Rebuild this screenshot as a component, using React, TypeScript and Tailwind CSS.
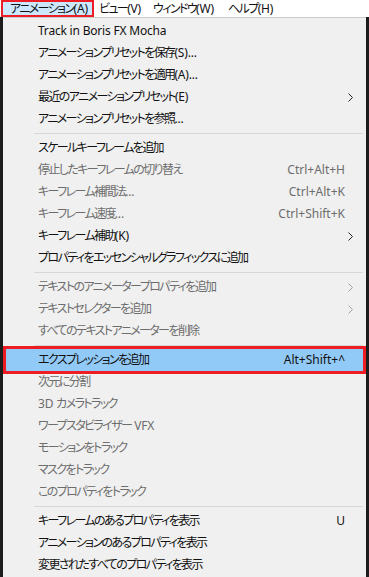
import React from 'react'

type Item =
  | { sep: true }
  | { label: string; shortcut?: string; sub?: boolean; disabled?: boolean; active?: boolean; sep?: false }

const items: Item[] = [
  { label: 'Track in Boris FX Mocha' },
  { label: 'アニメーションプリセットを保存(S)...' },
  { label: 'アニメーションプリセットを適用(A)...' },
  { label: '最近のアニメーションプリセット(E)', sub: true },
  { label: 'アニメーションプリセットを参照...' },
  { sep: true },
  { label: 'スケールキーフレームを追加' },
  { label: '停止したキーフレームの切り替え', shortcut: 'Ctrl+Alt+H', disabled: true },
  { label: 'キーフレーム補間法...', shortcut: 'Ctrl+Alt+K', disabled: true },
  { label: 'キーフレーム速度...', shortcut: 'Ctrl+Shift+K', disabled: true },
  { label: 'キーフレーム補助(K)', sub: true },
  { label: 'プロパティをエッセンシャルグラフィックスに追加' },
  { sep: true },
  { label: 'テキストのアニメータープロパティを追加', sub: true, disabled: true },
  { label: 'テキストセレクターを追加', sub: true, disabled: true },
  { label: 'すべてのテキストアニメーターを削除', disabled: true },
  { sep: true },
  { label: 'エクスプレッションを追加', shortcut: 'Alt+Shift+^', active: true },
  { label: '次元に分割', disabled: true },
  { label: '3D カメラトラック', disabled: true },
  { label: 'ワープスタビライザー VFX', disabled: true },
  { label: 'モーションをトラック', disabled: true },
  { label: 'マスクをトラック', disabled: true },
  { label: 'このプロパティをトラック', disabled: true },
  { sep: true },
  { label: 'キーフレームのあるプロパティを表示', shortcut: 'U' },
  { label: 'アニメーションのあるプロパティを表示' },
  { label: '変更されたすべてのプロパティを表示' },
]

const font = "font-['Noto_Sans','Noto_Sans_CJK_JP',sans-serif] [font-feature-settings:'palt']"

// Japanese runs get squeezed to match Yu Gothic UI widths, latin runs keep normal spacing
function Label({ text }: { text: string }) {
  const runs = text.match(/[\x00-\x7f]+|[^\x00-\x7f]+/g) ?? []
  return (
    <>
      {runs.map((r, i) => (
        <span key={i} className={/^[\x00-\x7f]/.test(r) ? 'tracking-[-0.2px]' : 'tracking-[-1.6px]'}>
          {r}
        </span>
      ))}
    </>
  )
}

function Arrow({ dim }: { dim?: boolean }) {
  return (
    <svg width="5" height="9" viewBox="0 0 5 9" className="block">
      <path d="M0.5 0.5 L4.5 4.5 L0.5 8.5" fill="none" stroke={dim ? '#a0a0a0' : '#222'} strokeWidth="1" />
    </svg>
  )
}

export default function App() {
  return (
    <div className={`w-[369px] h-[577px] bg-[#1c1c1c] overflow-hidden flex flex-col text-[12px] ${font}`}>
      {/* Menu bar */}
      <div className="h-[17px] bg-white flex items-center text-[#111] shrink-0 whitespace-nowrap">
        <div className="h-[17px] ml-[1px] w-[93px] bg-[#cce8ff] border-2 border-[#ee1c25] flex items-center pl-[7px] leading-none">
          <Label text="アニメーション(A)" />
        </div>
        <div className="ml-[5px] w-[54px] leading-none">
          <Label text="ビュー(V)" />
        </div>
        <div className="w-[75px] leading-none">
          <Label text="ウィンドウ(W)" />
        </div>
        <div className="leading-none">
          <Label text="ヘルプ(H)" />
        </div>
      </div>

      <div className="flex flex-1">
        <div className="w-[3px] bg-[#1c1c1c]" />
        {/* Dropdown panel */}
        <div className="w-[363px] bg-[#f0f0f0] border-t border-[#cccccc] pt-[2px] flex flex-col">
          {items.map((it, i) =>
            it.sep ? (
              <div key={i} className="h-[7px] flex items-center pl-[31px] pr-[3px]">
                <div className="h-px w-full bg-[#d7d7d7]" />
              </div>
            ) : (
              <div
                key={i}
                className={`h-[22px] flex items-center mx-[3px] ${
                  it.active ? 'bg-[#91c9f7] outline-[3px] outline-solid outline-[#ee1c25]' : ''
                } ${it.disabled ? 'text-[#6d6d6d]' : 'text-[#111]'}`}
              >
                <div className="pl-[32px] flex-1 whitespace-nowrap leading-none">
                  <Label text={it.label} />
                </div>
                {it.shortcut && <div className="whitespace-nowrap leading-none">{it.shortcut}</div>}
                <div className="w-[18px] pl-[3px] flex items-center">{it.sub && <Arrow dim={it.disabled} />}</div>
              </div>
            )
          )}
        </div>
        <div className="w-[3px] bg-[#1c1c1c]" />
      </div>
    </div>
  )
}
